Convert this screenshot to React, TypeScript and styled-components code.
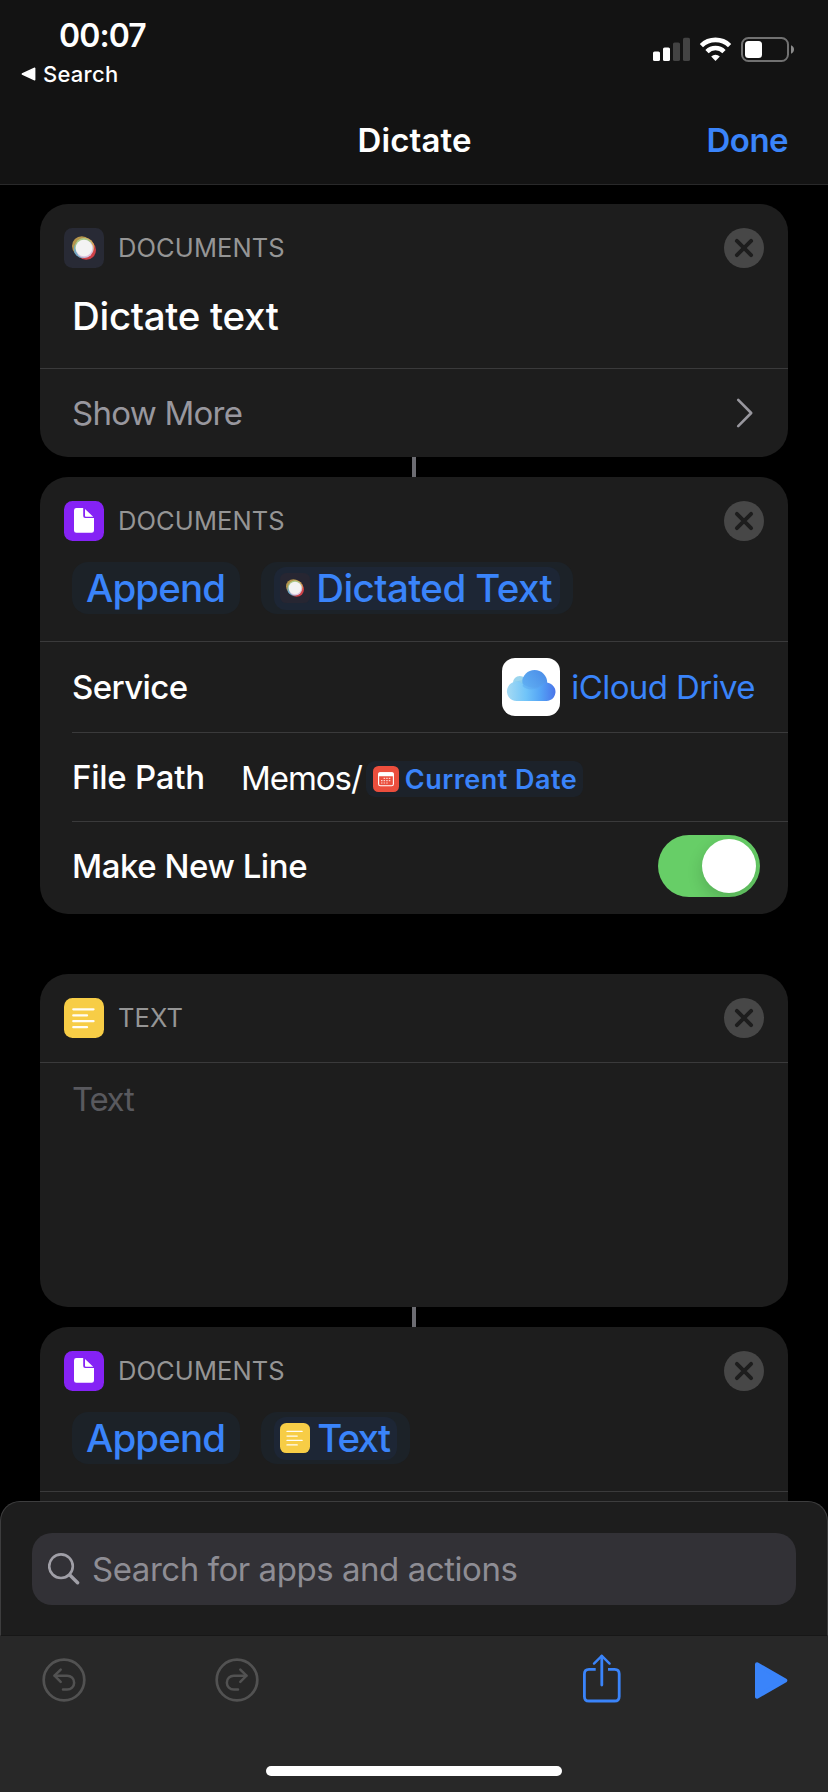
import React from 'react';
import styled, { createGlobalStyle } from 'styled-components';

const color = {
  bar: '#131313',
  card: '#1d1d1d',
  line: '#3a3a3b',
  blue: '#3a84fa',
  muted: '#98979e',
  label: '#959595',
};

const GlobalStyle = createGlobalStyle`
  * { box-sizing: border-box; }
  body {
    margin: 0;
    background: #000;
    color: #fff;
    font-family: Inter, "Liberation Sans", sans-serif;
  }
  svg { display: block; flex: none; }
`;

const Screen = styled.div`
  display: flex;
  flex-direction: column;
  width: 828px;
  height: 1792px;
  overflow: hidden;
  background: #000;
`;

/* ---------- header ---------- */

const Header = styled.header`
  flex: none;
  height: 185px;
  background: ${color.bar};
  border-bottom: 1px solid #29292a;
`;

const StatusBar = styled.div`
  display: flex;
  justify-content: space-between;
  height: 96px;
  padding: 16px 34px 0 21px;
`;

const Clock = styled.div`
  padding-left: 38px;
  font-size: 32px;
  font-weight: 600;
  line-height: 40px;
  letter-spacing: -0.9px;
`;

const BackLink = styled.div`
  display: flex;
  align-items: center;
  gap: 7px;
  height: 35px;
  font-size: 22px;
  font-weight: 500;
  letter-spacing: 0.25px;
`;

const StatusIcons = styled.div`
  display: flex;
  align-items: flex-start;
  gap: 9px;
  padding-top: 21px;
`;

const NavBar = styled.div`
  display: grid;
  grid-template-columns: 1fr auto 1fr;
  align-items: center;
  height: 88px;
  padding: 0 40px 0 41px;
  font-size: 33px;
  font-weight: 600;
`;

const NavTitle = styled.h1`
  grid-column: 2;
  margin: 0;
  font: inherit;
  letter-spacing: 0.1px;
`;

const DoneButton = styled.button`
  justify-self: end;
  padding: 0;
  border: 0;
  background: none;
  color: ${color.blue};
  font: inherit;
  letter-spacing: -0.54px;
`;

/* ---------- action cards ---------- */

const ActionList = styled.main`
  flex: 1;
  min-height: 0;
  padding: 19px 40px 0;
  overflow: hidden;
`;

const Card = styled.section<{ $height?: number; $gap?: number }>`
  height: ${p => (p.$height ? `${p.$height}px` : 'auto')};
  margin-top: ${p => p.$gap ?? 0}px;
  border-radius: 28px;
  background: ${color.card};
`;

const Connector = styled.div`
  width: 4px;
  height: 20px;
  margin: 0 auto;
  background: #6c6c72;
`;

const CardHeader = styled.div<{ $compact?: boolean }>`
  display: flex;
  align-items: center;
  height: ${p => (p.$compact ? 85 : 88)}px;
  padding: ${p => (p.$compact ? '3px 24px 0' : '0 24px')};
`;

const CardLabel = styled.span`
  flex: 1;
  padding: 0 0 1px 14px;
  color: ${color.label};
  font-size: 25.5px;
  letter-spacing: 0.1px;
`;

const Summary = styled.div`
  display: flex;
  align-items: flex-start;
  gap: 21px;
  height: 79px;
  padding: 0 32px;
  font-size: 38.5px;
  font-weight: 500;
  line-height: 52px;
`;

const SummaryTitle = styled.h2`
  margin: 1px 0 0;
  font: inherit;
  letter-spacing: -0.3px;
`;

const Pill = styled.span<{ $token?: boolean }>`
  display: flex;
  align-items: center;
  height: 52px;
  padding: 0 ${p => (p.$token ? 13 : 15)}px 0 ${p => (p.$token ? 13 : 14)}px;
  border-radius: 16px;
  background: #1c2228;
  color: ${color.blue};
  letter-spacing: -0.87px;
`;

const Token = styled.span<{ $width: number; $spacing: number; $lead: number }>`
  display: flex;
  align-items: center;
  gap: ${p => p.$lead}px;
  width: ${p => p.$width}px;
  height: 43px;
  padding-left: 6px;
  border-radius: 12px;
  background: #1d2635;
  letter-spacing: ${p => p.$spacing}px;
  white-space: nowrap;
`;

const Divider = styled.div<{ $inset?: boolean }>`
  height: 1px;
  margin-left: ${p => (p.$inset ? 32 : 0)}px;
  background: ${color.line};
`;

const Row = styled.div<{ $height?: number }>`
  display: flex;
  align-items: center;
  height: ${p => p.$height ?? 88}px;
  padding: 0 32px;
  font-size: 33px;
`;

const MoreLabel = styled.span`
  flex: 1;
  color: ${color.muted};
  letter-spacing: -0.75px;
`;

const FieldName = styled.span<{ $spacing: number; $grow?: boolean }>`
  flex: ${p => (p.$grow ? 1 : 'none')};
  font-weight: 500;
  letter-spacing: ${p => p.$spacing}px;
`;

const ServiceValue = styled.span`
  padding: 0 1px 0 11px;
  color: ${color.blue};
  letter-spacing: -0.59px;
`;

const PathValue = styled.span`
  display: flex;
  align-items: center;
  padding: 3px 0 0 36px;
  letter-spacing: -1.05px;
`;

const PathText = styled.span`
  padding-bottom: 1px;
`;

const DateToken = styled.span`
  display: flex;
  align-items: center;
  gap: 6px;
  width: 217px;
  height: 36px;
  margin-left: 4px;
  padding-left: 7px;
  border-radius: 9px;
  background: #1c222a;
  color: ${color.blue};
  font-size: 27px;
  font-weight: 600;
  line-height: 34px;
  letter-spacing: 0.5px;
  white-space: nowrap;
`;

const DateLabel = styled.span`
  padding-top: 2px;
`;

const Toggle = styled.span`
  display: flex;
  justify-content: flex-end;
  width: 102px;
  height: 62px;
  margin-right: -4px;
  padding: 4px;
  border-radius: 31px;
  overflow: hidden;
  background: #67ce67;
`;

const Knob = styled.span`
  width: 54px;
  height: 54px;
  border-radius: 50%;
  background: #fff;
  box-shadow: 0 6px 16px rgba(0, 0, 0, 0.16);
`;

const Placeholder = styled.div`
  padding: 15px 32px;
  color: #59595e;
  font-size: 33px;
  line-height: 42px;
  letter-spacing: -1.3px;
`;

/* ---------- bottom sheet and toolbar ---------- */

const Sheet = styled.div`
  flex: none;
  height: 135px;
  padding: 31px 31px 0;
  border: 1px solid #3d3d3e;
  border-bottom: 1px solid #171717;
  border-radius: 20px 20px 0 0;
  background: ${color.card};
`;

const SearchField = styled.div`
  display: flex;
  align-items: center;
  gap: 12px;
  height: 72px;
  padding: 0 16px;
  border-radius: 20px;
  background: #323136;
  color: #8e8d94;
  font-size: 33px;
  letter-spacing: -0.45px;
`;

const Toolbar = styled.footer`
  display: flex;
  flex-direction: column;
  flex: none;
  align-items: center;
  justify-content: space-between;
  height: 156px;
  padding-bottom: 16px;
  background: #282828;
`;

const ToolRow = styled.div`
  display: flex;
  align-items: center;
  justify-content: space-between;
  width: 100%;
  height: 88px;
  padding: 0 40px 0 42px;
`;

const ToolGroup = styled.div<{ $gap: number }>`
  display: flex;
  align-items: center;
  gap: ${p => p.$gap}px;
`;

const HomeIndicator = styled.div`
  width: 296px;
  height: 10px;
  border-radius: 5px;
  background: #fff;
`;

/* ---------- icons ---------- */

const StatusGlyphs = () => (
  <StatusIcons>
    <svg width="37" height="24" viewBox="0 0 37 24">
      <rect x="0" y="14.5" width="7" height="9.5" rx="1.6" fill="#fff" />
      <rect x="10" y="10.5" width="7" height="13.5" rx="1.6" fill="#fff" />
      <rect x="20" y="5.5" width="7" height="18.5" rx="1.6" fill="#434343" />
      <rect x="30" y="0.7" width="7" height="23.3" rx="1.6" fill="#434343" />
    </svg>
    <svg width="33" height="24" viewBox="0 0 33 24">
      <g fill="none" stroke="#fff" strokeWidth="4.6">
        <path d="M2.4 8.6 A20.2 20.2 0 0 1 30.6 8.6" />
        <path d="M8 14.6 A12 12 0 0 1 25 14.6" />
      </g>
      <path d="M16.5 24 L12.2 19.6 A6.2 6.2 0 0 1 20.8 19.6 Z" fill="#fff" />
    </svg>
    <svg width="53" height="25" viewBox="0 0 53 25">
      <rect x="1" y="1" width="46" height="23" rx="6.5" fill="none" stroke="#717171" strokeWidth="2" />
      <rect x="4" y="4" width="17" height="17" rx="3.5" fill="#fff" />
      <path d="M50 8.3 C52 9 53 10.6 53 12.5 S52 16 50 16.7 Z" fill="#8a8a8a" />
    </svg>
  </StatusIcons>
);

const CloseIcon = () => (
  <svg width="40" height="40" viewBox="0 0 40 40">
    <circle cx="20" cy="20" r="20" fill="#474747" />
    <path d="M12.9 12.9 L27.1 27.1 M27.1 12.9 L12.9 27.1" stroke={color.card} strokeWidth="3.9" strokeLinecap="round" />
  </svg>
);

const DictateIcon = ({ size, bg }: { size: number; bg: string }) => (
  <svg width={size} height={size} viewBox="0 0 40 40">
    <rect width="40" height="40" rx="8.5" fill={bg} />
    <circle cx="17.8" cy="18" r="9.8" fill="#b5954c" />
    <circle cx="22.2" cy="22" r="9.8" fill="#cf4148" />
    <circle cx="21" cy="19" r="9.3" fill="#dba55c" />
    <circle cx="18.8" cy="21.2" r="9" fill="#72a9c4" />
    <circle cx="19.8" cy="18.8" r="8.9" fill="#a9c98a" />
    <circle cx="20.6" cy="21" r="8.8" fill="#dcc3de" />
    <circle cx="20" cy="20" r="8.3" fill="#f3f3f3" />
  </svg>
);

const DocumentIcon = () => (
  <svg width="40" height="40" viewBox="0 0 40 40">
    <rect width="40" height="40" rx="8.5" fill="#8522f5" />
    <path d="M12.3 7 H19.2 V15 Q19.2 17 21.2 17 H30 V29.4 Q30 31.8 27.6 31.8 H12.4 Q10 31.8 10 29.4 V9.4 Q10 7 12.3 7 Z" fill="#fff" />
    <path d="M21 8 L29.2 15.8 H21.8 Q21 15.8 21 15 Z" fill="#fff" />
  </svg>
);

const TextIcon = ({ size, stroke }: { size: number; stroke: number }) => (
  <svg width={size} height={size} viewBox="0 0 40 40">
    <rect width="40" height="40" rx="8.5" fill="#f7cd46" />
    <path
      d="M9.3 11.3 H29.5 M9.3 17.4 H23 M9.3 23.2 H29.5 M9.3 29.2 H23"
      stroke="#fffdf5" strokeWidth={stroke} strokeLinecap="round"
    />
  </svg>
);

const CloudIcon = () => (
  <svg width="58" height="58" viewBox="0 0 58 58">
    <defs>
      <linearGradient id="cloudBase" x1="5" x2="53" y1="0" y2="0" gradientUnits="userSpaceOnUse">
        <stop offset="0" stopColor="#a5daf3" />
        <stop offset="0.4" stopColor="#70c4f9" />
        <stop offset="0.7" stopColor="#54a3f5" />
        <stop offset="1" stopColor="#4a76ea" />
      </linearGradient>
      <linearGradient id="cloudTop" x1="22" x2="42" y1="30" y2="14" gradientUnits="userSpaceOnUse">
        <stop offset="0" stopColor="#60b0f3" />
        <stop offset="1" stopColor="#4c8ee8" />
      </linearGradient>
    </defs>
    <rect width="58" height="58" rx="13" fill="#fff" />
    <circle cx="17.8" cy="24.8" r="6.9" fill="#9bd5ee" />
    <circle cx="32.6" cy="24.6" r="12.6" fill="url(#cloudTop)" />
    <path d="M14.7 43 A9.7 9.7 0 1 1 21 26 C26 30 36 31 37.5 27.6 A9.2 9.2 0 1 1 43.8 43 Z" fill="url(#cloudBase)" />
    <path d="M12 24 A9.7 9.7 0 0 1 22.5 28.3 A12.6 12.6 0 0 1 20.3 22" fill="#7cc5ec" opacity="0.6" />
    <path d="M20.5 28 C25 33 36 33 43 24.8 L41 20 H24 Z" fill="url(#cloudTop)" opacity="0.65" />
  </svg>
);

const CalendarIcon = () => (
  <svg width="26" height="26" viewBox="0 0 26 26">
    <rect width="26" height="26" rx="5.5" fill="#eb4e3d" />
    <rect x="5.6" y="6.7" width="14.8" height="13" rx="1.8" fill="none" stroke="#fff" strokeWidth="1.1" />
    <path d="M5.2 10.2 V8 Q5.2 6.2 7 6.2 H19 Q20.8 6.2 20.8 8 V10.2 Z" fill="#fff" />
    <g stroke="#fbd5d0" strokeWidth="1.2" strokeDasharray="1.5 1.1">
      <path d="M10.6 12.4 H18.4 M8 14.7 H18.4 M8 17 H15.6" />
    </g>
  </svg>
);

const HistoryIcon = ({ redo }: { redo?: boolean }) => (
  <svg width="44" height="44" viewBox="-22 -22 44 44">
    <g fill="none" stroke="#525252" strokeLinecap="round" strokeLinejoin="round" transform={redo ? 'scale(-1 1)' : undefined}>
      <circle r="20.3" strokeWidth="2.7" />
      <path d="M-9.3 -4.3 H3.2 A6.95 6.95 0 0 1 3.2 9.6 H-1" strokeWidth="2.5" />
      <path d="M-3.3 -10.3 L-9.5 -4.3 L-3.3 1.8" strokeWidth="2.5" />
    </g>
  </svg>
);

const ShareIcon = () => (
  <svg width="38" height="53" viewBox="0 0 38 53">
    <g fill="none" stroke={color.blue} strokeWidth="2.8">
      <path d="M12.7 15.4 H6 Q1.4 15.4 1.4 20 V42.4 Q1.4 47 6 47 H31.6 Q36.2 47 36.2 42.4 V20 Q36.2 15.4 31.6 15.4 H25" />
      <path d="M18.8 2.2 V31" strokeLinecap="round" />
      <path d="M11 9.6 L18.8 1.8 L26.6 9.6" strokeWidth="2.4" strokeLinecap="round" strokeLinejoin="round" />
    </g>
  </svg>
);

const PlayIcon = () => (
  <svg width="33" height="37" viewBox="0 0 33 37">
    <path d="M2 2.3 L30.3 18.5 L2 34.7 Z" fill={color.blue} stroke={color.blue} strokeWidth="4" strokeLinejoin="round" />
  </svg>
);

const ActionHeader = ({ icon, label, compact }: { icon: React.ReactNode; label: string; compact?: boolean }) => (
  <CardHeader $compact={compact}>
    {icon}
    <CardLabel>{label}</CardLabel>
    <CloseIcon />
  </CardHeader>
);

export default function App() {
  return (
    <Screen>
      <GlobalStyle />
      <Header>
        <StatusBar>
          <div>
            <Clock>00:07</Clock>
            <BackLink>
              <svg width="15" height="14" viewBox="0 0 15 14">
                <path d="M1.3 7 L13.7 1.2 V12.8 Z" fill="#fff" stroke="#fff" strokeWidth="1.4" strokeLinejoin="round" />
              </svg>
              Search
            </BackLink>
          </div>
          <StatusGlyphs />
        </StatusBar>
        <NavBar>
          <NavTitle>Dictate</NavTitle>
          <DoneButton>Done</DoneButton>
        </NavBar>
      </Header>

      <ActionList>
        <Card $height={253}>
          <ActionHeader compact icon={<DictateIcon size={40} bg="#282a35" />} label="DOCUMENTS" />
          <Summary>
            <SummaryTitle>Dictate text</SummaryTitle>
          </Summary>
          <Divider />
          <Row>
            <MoreLabel>Show More</MoreLabel>
            <svg width="20" height="30" viewBox="0 0 20 30">
              <path d="M2.2 1.9 L15.2 15 L2.2 28.1" fill="none" stroke={color.muted} strokeWidth="2.6" strokeLinecap="round" strokeLinejoin="round" />
            </svg>
          </Row>
        </Card>

        <Connector />

        <Card $height={437}>
          <ActionHeader compact icon={<DocumentIcon />} label="DOCUMENTS" />
          <Summary>
            <Pill>Append</Pill>
            <Pill $token>
              <Token $width={286} $spacing={-0.58} $lead={6}>
                <DictateIcon size={30} bg="#272632" />
                Dictated Text
              </Token>
            </Pill>
          </Summary>
          <Divider />
          <Row $height={90}>
            <FieldName $spacing={-0.6} $grow>Service</FieldName>
            <CloudIcon />
            <ServiceValue>iCloud Drive</ServiceValue>
          </Row>
          <Divider $inset />
          <Row>
            <FieldName $spacing={-0.24}>File Path</FieldName>
            <PathValue>
              <PathText>Memos/</PathText>
              <DateToken>
                <CalendarIcon />
                <DateLabel>Current Date</DateLabel>
              </DateToken>
            </PathValue>
          </Row>
          <Divider $inset />
          <Row>
            <FieldName $spacing={-0.45} $grow>Make New Line</FieldName>
            <Toggle>
              <Knob />
            </Toggle>
          </Row>
        </Card>

        <Card $height={333} $gap={60}>
          <ActionHeader icon={<TextIcon size={40} stroke={2.3} />} label="TEXT" />
          <Divider />
          <Placeholder>Text</Placeholder>
        </Card>

        <Connector />

        <Card $height={253}>
          <ActionHeader compact icon={<DocumentIcon />} label="DOCUMENTS" />
          <Summary>
            <Pill>Append</Pill>
            <Pill $token>
              <Token $width={123} $spacing={-1.8} $lead={7}>
                <TextIcon size={30} stroke={1.7} />
                Text
              </Token>
            </Pill>
          </Summary>
          <Divider />
        </Card>
      </ActionList>

      <Sheet>
        <SearchField>
          <svg width="32" height="33" viewBox="0 0 32 33">
            <g fill="none" stroke="#a09fa7" strokeLinecap="round">
              <circle cx="13" cy="13.2" r="11.8" strokeWidth="2.6" />
              <path d="M21.8 22 L29.6 29.8" strokeWidth="3.4" />
            </g>
          </svg>
          Search for apps and actions
        </SearchField>
      </Sheet>

      <Toolbar>
        <ToolRow>
          <ToolGroup $gap={129}>
            <HistoryIcon />
            <HistoryIcon redo />
          </ToolGroup>
          <ToolGroup $gap={134}>
            <ShareIcon />
            <PlayIcon />
          </ToolGroup>
        </ToolRow>
        <HomeIndicator />
      </Toolbar>
    </Screen>
  );
}
